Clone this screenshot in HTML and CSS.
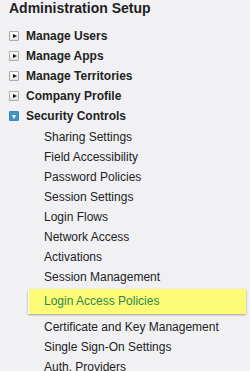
FILE: index.html
```html
<!DOCTYPE html>
<html>
<head>
<meta charset="utf-8">
<link rel="stylesheet" href="styles.css">
</head>
<body>
<div class="panel">
  <h1 class="title">Administration Setup</h1>
  <ul class="menu">
    <li class="group"><span class="toggle"></span>Manage Users</li>
    <li class="group"><span class="toggle"></span>Manage Apps</li>
    <li class="group"><span class="toggle"></span>Manage Territories</li>
    <li class="group"><span class="toggle"></span>Company Profile</li>
    <li class="group"><span class="toggle open"></span>Security Controls</li>
  </ul>
  <ul class="sub">
    <li>Sharing Settings</li>
    <li>Field Accessibility</li>
    <li>Password Policies</li>
    <li>Session Settings</li>
    <li>Login Flows</li>
    <li>Network Access</li>
    <li>Activations</li>
    <li>Session Management</li>
    <li class="hl">Login Access Policies</li>
    <li>Certificate and Key Management</li>
    <li>Single Sign-On Settings</li>
    <li>Auth. Providers</li>
  </ul>
</div>
</body>
</html>
```
FILE: styles.css
```css
html, body {
  margin: 0;
  padding: 0;
  height: 100%;
  overflow: hidden;
  background: #f1f1f4;
}
.panel {
  font-family: "Liberation Sans", Arial, sans-serif;
  color: #222;
  padding-left: 9px;
}
.title {
  margin: 0 0 10px 0;
  font-size: 14px;
  line-height: 16px;
  font-weight: bold;
  color: #1e1e1e;
}
.menu, .sub {
  list-style: none;
  margin: 0;
  padding: 0;
}
.group {
  font-size: 12px;
  font-weight: bold;
  line-height: 20px;
  height: 20px;
  display: flex;
  align-items: flex-start;
}
.toggle {
  box-sizing: border-box;
  width: 10px;
  height: 10px;
  margin-top: 5px;
  margin-right: 7px;
  border: 1px solid #aaa;
  border-radius: 1px;
  background: linear-gradient(#fdfdfd, #e4e4e4);
  position: relative;
  flex: none;
}
.toggle::after {
  content: "";
  position: absolute;
  left: 3px;
  top: 1.5px;
  border-left: 4px solid #111;
  border-top: 2.5px solid transparent;
  border-bottom: 2.5px solid transparent;
}
.toggle.open {
  border-color: #3a8cc0;
  background: #3f93c9;
}
.toggle.open::after {
  left: 1.5px;
  top: 3px;
  border-top: 4px solid #fff;
  border-left: 2.5px solid transparent;
  border-right: 2.5px solid transparent;
  border-bottom: 0;
}
.sub {
  margin-top: 1px;
}
.sub li {
  font-size: 12px;
  line-height: 20px;
  height: 20px;
  padding-left: 35px;
}
.sub li.hl {
  margin: 2px 4px 3px 19px;
  height: 25px;
  line-height: 25px;
  padding-left: 15px;
  background: #fdfb76;
  border-left: 1px solid #fff;
  box-shadow: 0 1px 2px rgba(0, 0, 0, 0.35);
  color: #2d8a4e;
}
```
